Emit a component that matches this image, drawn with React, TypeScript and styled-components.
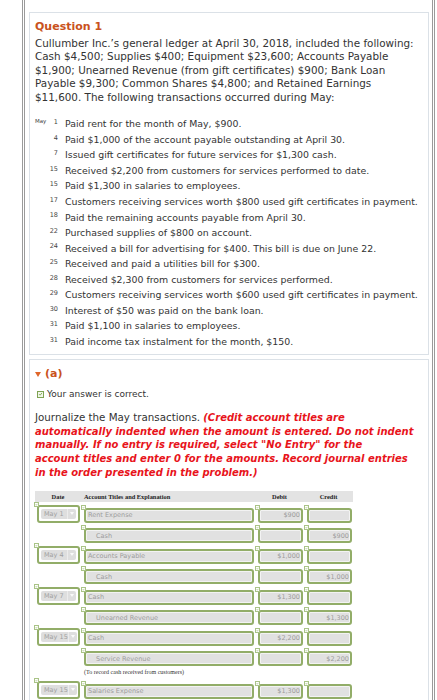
import styled, { createGlobalStyle } from "styled-components";

const GlobalStyle = createGlobalStyle`
  body {
    margin: 0;
    background: #fff;
    font-family: "DejaVu Sans", Verdana, sans-serif;
    color: #333;
  }
`;

const Frame = styled.div`
  margin-left: 22px;
  width: 400px;
  min-height: 700px;
  padding: 12px 3px 0 4px;
  border-left: 3px double #9a9a9a;
  border-right: 3px double #9a9a9a;
  display: flex;
  flex-direction: column;
  gap: 4px;
`;

const Panel = styled.div`
  border: 1px solid #dbe1e7;
  background: #fff;
  padding: 7px 5px 5px 5px;
`;

const Heading = styled.div`
  font-size: 11px;
  font-weight: bold;
  line-height: 14px;
  color: #c9521c;
  display: flex;
  align-items: center;
  gap: 4px;
`;

const Para = styled.p`
  margin: 3px 0 0;
  font-size: 10.4px;
  line-height: 13.4px;
  white-space: nowrap;
`;

const TxList = styled.div`
  margin-top: 12px;
  display: flex;
  flex-direction: column;
`;

const TxRow = styled.div`
  display: grid;
  grid-template-columns: 13px 10px 1fr;
  height: 15.55px;
  align-items: center;
  font-size: 9.4px;
  white-space: nowrap;
`;

const TxMonth = styled.span`
  font-size: 5.5px;
  align-self: start;
  padding-top: 2px;
  color: #444;
`;

const TxDay = styled.span`
  font-size: 6.5px;
  text-align: right;
  align-self: start;
  padding-top: 2px;
  color: #444;
`;

const TxText = styled.span`
  padding-left: 7px;
`;

const Correct = styled.div`
  margin-top: 7px;
  display: flex;
  align-items: center;
  gap: 3px;
  padding-left: 2px;
  font-size: 9px;
  line-height: 12px;
`;

const Box = styled.span`
  width: 7px;
  height: 7px;
  box-sizing: border-box;
  border: 1px solid #7fa352;
  background: #f1f7ea;
  display: flex;
  align-items: center;
  justify-content: center;
`;

const Instructions = styled.p`
  margin: 11px 0 0;
  font-size: 10.3px;
  line-height: 13.6px;
  white-space: nowrap;
`;

const Red = styled.span`
  color: #e8141b;
  font-weight: bold;
  font-style: italic;
  font-size: 10px;
`;

const Table = styled.div`
  margin-top: 12px;
  width: 318px;
`;

const Cols = styled.div`
  display: grid;
  grid-template-columns: 46px 174px 49px 49px;
`;

const HeadRow = styled(Cols)`
  height: 11px;
  background: #e3e3e3;
  align-items: center;
  font-family: "Liberation Serif", "Times New Roman", serif;
  font-weight: bold;
  font-size: 6.4px;
  color: #222;
`;

const HeadCell = styled.span<{ $left?: boolean }>`
  text-align: ${(p) => (p.$left ? "left" : "center")};
  padding-left: ${(p) => (p.$left ? "3px" : "0")};
`;

const EntryRow = styled(Cols)`
  height: 20.5px;
  align-items: end;
`;

const Cell = styled.div<{ $pl: number }>`
  padding-left: ${(p) => p.$pl}px;
  padding-right: 1px;
`;

const Field = styled.div<{ $right?: boolean; $indent?: boolean }>`
  position: relative;
  height: 15px;
  box-sizing: border-box;
  border: 2px solid #92ad68;
  border-radius: 3px;
  background: #e1e1e1;
  box-shadow: inset 0 0 0 1px #f3f3f3;
  display: flex;
  align-items: center;
  justify-content: ${(p) => (p.$right ? "flex-end" : "flex-start")};
  padding: 0 ${(p) => (p.$right ? "1px" : "0")} 0 ${(p) => (p.$indent ? "10px" : "2px")};
  font-size: 6.5px;
  color: #9c9c9c;
  white-space: nowrap;
`;

const DateBox = styled.div`
  position: relative;
  height: 18px;
  box-sizing: border-box;
  border: 2px solid #92ad68;
  border-radius: 3px;
  padding: 2px;
  display: flex;
`;

const Select = styled.div`
  flex: 1;
  display: flex;
  align-items: center;
  background: #dedede;
  border-radius: 2px;
  font-size: 6.5px;
  color: #a0a0a0;
  white-space: nowrap;
`;

const SelectText = styled.span`
  flex: 1;
  padding-left: 3px;
`;

const SelectArrow = styled.span`
  width: 9px;
  height: 100%;
  box-sizing: border-box;
  border-left: 1px solid #ececec;
  display: flex;
  align-items: center;
  justify-content: center;
`;

const Tick = styled.span`
  position: absolute;
  left: -5px;
  top: -5px;
  width: 5px;
  height: 5px;
  box-sizing: border-box;
  border: 1px solid #a9c386;
  background: #fff;
  display: flex;
  align-items: center;
  justify-content: center;
`;

const Note = styled.div`
  height: 12px;
  padding-left: 49px;
  display: flex;
  align-items: center;
  font-family: "Liberation Serif", "Times New Roman", serif;
  font-size: 6px;
  color: #333;
  white-space: nowrap;
`;

const CheckMark = ({ size }: { size: number }) => (
  <svg width={size} height={size} viewBox="0 0 10 10">
    <path d="M2 5.2 L4.2 7.4 L8 2.8" fill="none" stroke="#6f9a3c" strokeWidth="1.6" />
  </svg>
);

const TickIcon = () => (
  <Tick>
    <CheckMark size={3} />
  </Tick>
);

const transactions: [string, string, string][] = [
  ["May", "1", "Paid rent for the month of May, $900."],
  ["", "4", "Paid $1,000 of the account payable outstanding at April 30."],
  ["", "7", "Issued gift certificates for future services for $1,300 cash."],
  ["", "15", "Received $2,200 from customers for services performed to date."],
  ["", "15", "Paid $1,300 in salaries to employees."],
  ["", "17", "Customers receiving services worth $800 used gift certificates in payment."],
  ["", "18", "Paid the remaining accounts payable from April 30."],
  ["", "22", "Purchased supplies of $800 on account."],
  ["", "24", "Received a bill for advertising for $400. This bill is due on June 22."],
  ["", "25", "Received and paid a utilities bill for $300."],
  ["", "28", "Received $2,300 from customers for services performed."],
  ["", "29", "Customers receiving services worth $600 used gift certificates in payment."],
  ["", "30", "Interest of $50 was paid on the bank loan."],
  ["", "31", "Paid $1,100 in salaries to employees."],
  ["", "31", "Paid income tax instalment for the month, $150."],
];

type Line = { date?: string; account: string; debit?: string; credit?: string; note?: string };

const entries: Line[] = [
  { date: "May 1", account: "Rent Expense", debit: "$900" },
  { account: "Cash", credit: "$900" },
  { date: "May 4", account: "Accounts Payable", debit: "$1,000" },
  { account: "Cash", credit: "$1,000" },
  { date: "May 7", account: "Cash", debit: "$1,300" },
  { account: "Unearned Revenue", credit: "$1,300" },
  { date: "May 15", account: "Cash", debit: "$2,200" },
  { account: "Service Revenue", credit: "$2,200", note: "(To record cash received from customers)" },
  { date: "May 15", account: "Salaries Expense", debit: "$1,300" },
];

function Entry({ line }: { line: Line }) {
  const isCredit = !line.date;
  return (
    <>
      <EntryRow>
        <Cell $pl={2}>
          {line.date ? (
            <DateBox>
              <TickIcon />
              <Select>
                <SelectText>{line.date}</SelectText>
                <SelectArrow>
                  <svg width="4" height="3" viewBox="0 0 4 3">
                    <path d="M0 0 L4 0 L2 3 Z" fill="#fafafa" />
                  </svg>
                </SelectArrow>
              </Select>
            </DateBox>
          ) : null}
        </Cell>
        <Cell $pl={3}>
          <Field $indent={isCredit}>
            <TickIcon />
            {line.account}
          </Field>
        </Cell>
        <Cell $pl={3}>
          <Field $right>
            <TickIcon />
            {line.debit}
          </Field>
        </Cell>
        <Cell $pl={3}>
          <Field $right>
            <TickIcon />
            {line.credit}
          </Field>
        </Cell>
      </EntryRow>
      {line.note ? <Note>{line.note}</Note> : null}
    </>
  );
}

export default function App() {
  return (
    <>
      <GlobalStyle />
      <Frame>
        <Panel>
          <Heading>Question 1</Heading>
          <Para>
            Cullumber Inc.’s general ledger at April 30, 2018, included the following:
            <br />
            Cash $4,500; Supplies $400; Equipment $23,600; Accounts Payable
            <br />
            $1,900; Unearned Revenue (from gift certificates) $900; Bank Loan
            <br />
            Payable $9,300; Common Shares $4,800; and Retained Earnings
            <br />
            $11,600. The following transactions occurred during May:
          </Para>
          <TxList>
            {transactions.map(([month, day, text], i) => (
              <TxRow key={i}>
                <TxMonth>{month}</TxMonth>
                <TxDay>{day}</TxDay>
                <TxText>{text}</TxText>
              </TxRow>
            ))}
          </TxList>
        </Panel>
        <Panel>
          <Heading>
            <svg width="6" height="5" viewBox="0 0 6 5">
              <path d="M0 0 L6 0 L3 5 Z" fill="#e0662a" />
            </svg>
            (a)
          </Heading>
          <Correct>
            <Box>
              <CheckMark size={6} />
            </Box>
            Your answer is correct.
          </Correct>
          <Instructions>
            Journalize the May transactions. <Red>(Credit account titles are</Red>
            <br />
            <Red>automatically indented when the amount is entered. Do not indent</Red>
            <br />
            <Red>manually. If no entry is required, select "No Entry" for the</Red>
            <br />
            <Red>account titles and enter 0 for the amounts. Record journal entries</Red>
            <br />
            <Red>in the order presented in the problem.)</Red>
          </Instructions>
          <Table>
            <HeadRow>
              <HeadCell>Date</HeadCell>
              <HeadCell $left>Account Titles and Explanation</HeadCell>
              <HeadCell>Debit</HeadCell>
              <HeadCell>Credit</HeadCell>
            </HeadRow>
            {entries.map((line, i) => (
              <Entry key={i} line={line} />
            ))}
          </Table>
        </Panel>
      </Frame>
    </>
  );
}
